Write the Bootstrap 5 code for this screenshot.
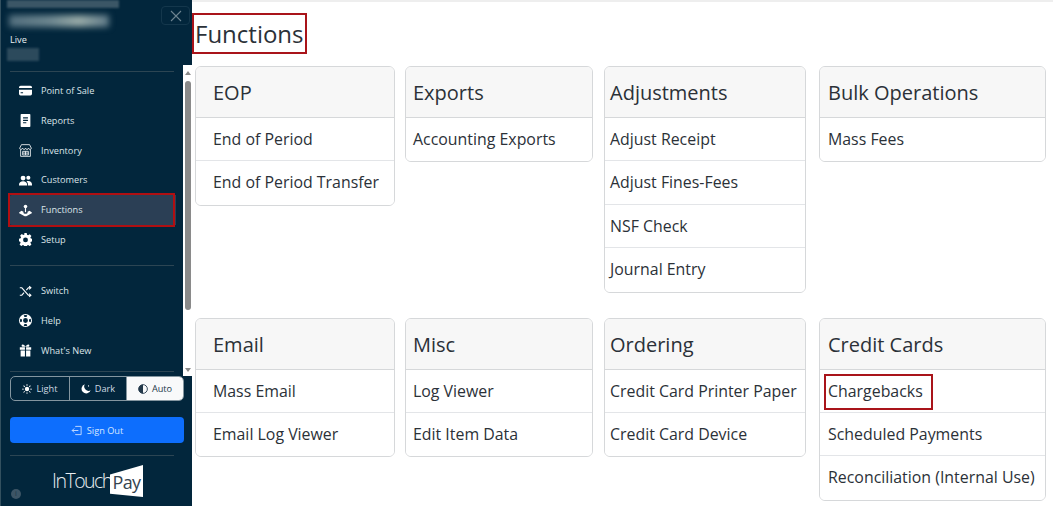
<!DOCTYPE html>
<html lang="en">
<head>
<meta charset="utf-8">
<title>Functions</title>
<link href="https://cdn.jsdelivr.net/npm/bootstrap@5.3.0/dist/css/bootstrap.min.css" rel="stylesheet">
<style>
html,body{height:506px;overflow:hidden;background:#fff}
body{font-family:"Open Sans","Noto Sans",sans-serif;color:#2b3138}
.shell{height:506px}
.side{width:192px;flex:none;background:#02263c;color:#dfe6ea;border-left:1px solid #33505f;position:relative;font-size:9.2px}
.topblur{position:absolute;left:6px;top:0;width:112px;height:8px;background:#3b5666;filter:blur(1px)}
.namebar{position:absolute;left:8px;top:15px;width:100px;height:12px;background:linear-gradient(90deg,#54707f,#6d8790 40%,#9aaca9 70%,#5f7a88);filter:blur(3px)}
.livetxt{position:absolute;left:9px;top:33px;font-size:9.2px;color:#e9eef0}
.acct{position:absolute;left:6px;top:48px;width:32px;height:13px;background:#2c4a5c;filter:blur(1px)}
.closer{position:absolute;left:160px;top:6px;width:29px;height:19px;border:1px solid #14374c;border-radius:4px;display:flex;align-items:center;justify-content:center}
.rule{position:absolute;left:9px;width:164px;height:1px;background:#2c4553}
.navzone{position:absolute;left:0;top:76px;width:183px}
.navrow{height:29.8px;padding-left:18px;gap:9px;display:flex;align-items:center;color:#dce4e8}
.navrow svg{width:13px;height:13px;flex:none;fill:#fff}
.navrow.sel{background:#2b3f55;margin:0 8px;padding-left:10px;border-radius:3px 0 0 3px}
.gapper{height:21.4px}
.hlnav{position:absolute;left:7px;top:193px;width:167px;height:34px;border:2px solid #b00f12;pointer-events:none}
.sbar{position:absolute;left:182px;top:65px;width:10px;height:311px;background:#fff}
.sthumb{position:absolute;left:2px;top:16px;width:6px;height:229px;background:#8a8a8a;border-radius:3px}
.sup,.sdn{position:absolute;left:2px;width:0;height:0;border-left:3px solid transparent;border-right:3px solid transparent}
.sup{top:6px;border-bottom:4px solid #8a8a8a}
.sdn{bottom:4px;border-top:4px solid #8a8a8a}
.themes{position:absolute;left:9px;top:376px;width:174px;height:25px;border:1px solid #8496a0;border-radius:5px;overflow:hidden;display:flex}
.themes span{display:flex;align-items:center;justify-content:center;gap:4px;color:#cfdbe2;font-size:9.2px;border-right:1px solid #8496a0;padding-top:1px}
.themes svg{width:10px;height:10px}
.themes span:nth-child(1){width:59px}
.themes span:nth-child(2){width:57px}
.themes span:nth-child(3){flex:1;background:#f8f9fa;color:#22384a;border:0}
.signout{position:absolute;left:9px;top:417px;width:174px;height:26px;border-radius:4px;background:#0d6efd;color:#d5e6ff;font-size:9.2px;display:flex;align-items:center;justify-content:center;gap:4px;border:0;padding:1px 0 0}
.logoword{position:absolute;left:51px;top:467px;font-size:19.5px;letter-spacing:-1.5px;font-weight:300;color:#e9eef1;line-height:28px}
.logopay{position:absolute;left:109px;top:465px;width:33px;height:32px;background:#fff;color:#36444f;font-size:18px;line-height:35px;text-align:center;letter-spacing:-.6px;clip-path:polygon(0 30%,100% 0,100% 100%,0 90%)}
.infodot{position:absolute;left:10px;top:489px;width:10px;height:10px;border-radius:50%;background:#3d5566;color:#1a3648;font-size:7px;line-height:10px;text-align:center}
.mainpane{flex:1;min-width:0;border-top:2px solid #eeeeee;position:relative}
.pagetitle{font-size:24px;font-weight:400;line-height:38px;margin:0;padding:0 1px;position:absolute;left:0;top:11px;height:41px;border:2px solid #a9141a;width:115px;display:flex;align-items:center;color:#2b3138}
.cardgrid{display:grid;grid-template-columns:210px 199px 215px 227px;padding:64px 0 0 3px}
.cardgrid>:nth-child(4n+1){margin-right:10px}
.cardgrid>:nth-child(4n+2){margin-right:11px}
.cardgrid>:nth-child(4n+3){margin-right:13px}
.cardgrid>:nth-child(n+5){margin-top:25px}
.fnbox{--bs-card-border-color:#d6d8da;--bs-card-border-radius:6px;--bs-card-cap-bg:#f7f7f7;border-width:1px;align-self:start}
.fnbox .card-header{height:51px;padding:0 var(--pad,17px);font-size:20px;line-height:52px;color:#2b3138;border-bottom-color:#d6d8da}
.fnbox .list-group-item{height:43.4px;padding:0 var(--pad,17px);line-height:43px;font-size:15.9px;color:#2b3138;border-color:#e3e5e8;white-space:nowrap}
.cardgrid>:nth-child(4n+2){--pad:7px}
.cardgrid>:nth-child(4n+3){--pad:5px}
.cardgrid>:nth-child(4n){--pad:8px}
.markbox{position:relative;display:inline-block}
.markbox::after{content:"";position:absolute;left:-4px;top:4px;width:109px;height:36px;border:2px solid #a9141a}
</style>
</head>
<body>
<div class="shell d-flex">
  <aside class="side">
    <div class="topblur"></div>
    <div class="namebar"></div>
    <div class="livetxt">Live</div>
    <div class="acct"></div>
    <div class="closer"><svg width="12" height="12" viewBox="0 0 12 12"><path d="M1 1l10 10M11 1L1 11" stroke="#6d8491" stroke-width="1.1"/></svg></div>
    <div class="rule" style="top:71px"></div>
    <nav class="navzone">
      <div class="navrow"><svg viewBox="0 0 16 16"><path d="M0 4a2 2 0 0 1 2-2h12a2 2 0 0 1 2 2v1H0V4zm0 3h16v5a2 2 0 0 1-2 2H2a2 2 0 0 1-2-2V7zm2 3v1.500h3V10H2z" fill-rule="evenodd"/></svg>Point of Sale</div>
      <div class="navrow"><svg viewBox="0 0 16 16"><path d="M3 0h10a1 1 0 0 1 1 1v14a1 1 0 0 1-1 1H3a1 1 0 0 1-1-1V1a1 1 0 0 1 1-1zm2 4v1.500h6V4H5zm0 3v1.500h6V7H5zm0 3v1.500h4V10H5z" fill-rule="evenodd"/></svg>Reports</div>
      <div class="navrow"><svg viewBox="0 0 16 16" style="fill:none;stroke:#fff;stroke-width:1"><path d="M3 .8h10l2.200 4.400c0 2-3 2-3.600 0 0 2-3.200 2-3.600 0 0 2-3.200 2-3.600 0 -.6 2-3.600 2-3.600 0L3 .8z"/><path d="M2 7v8.200h12V7M4.500 9h7v4.500h-7zM4.500 11.200h7M8 9v4.500"/></svg>Inventory</div>
      <div class="navrow"><svg viewBox="0 0 16 16"><circle cx="5" cy="5" r="3"/><circle cx="11.500" cy="4.500" r="2.500"/><path d="M0 13.500C0 10.500 2 9 5 9s5 1.500 5 4.500V14H0v-.5zM11 14v-1c0-1.500-.6-3-1.800-4 .7-.3 1.400-.4 2.300-.4 2.700 0 4.500 1.600 4.500 4.400v1h-5z"/></svg>Customers</div>
      <div class="navrow sel"><svg viewBox="0 0 16 16"><circle cx="8" cy="3" r="2.200"/><path d="M7.300 5h1.400v5H7.300z"/><path d="M3 8.300l2.500 1.100v1.300c0 .7 1.200 1.300 2.500 1.300s2.500-.6 2.500-1.300V9.400L13 8.300l2.800 2.200c.3.300.2.700-.1.900L9 15H7l-6.700-3.600c-.3-.2-.4-.6-.1-.9z"/></svg>Functions</div>
      <div class="navrow"><svg viewBox="0 0 16 16"><path d="M6.500 0h3l.4 2.200 1.400.6L13.200 1.500l2.100 2.100-1.300 1.900.6 1.400 2.200.4v3l-2.200.4-.6 1.400 1.300 1.900-2.100 2.100-1.900-1.300-1.400.6-.4 2.200h-3l-.4-2.200-1.400-.6-1.900 1.300-2.100-2.100 1.300-1.900-.6-1.400L-.2 10V7l2.200-.4.6-1.400-1.300-1.900 2.100-2.100 1.900 1.300 1.400-.6L6.500 0zM8 5.500a3 3 0 1 0 0 6 3 3 0 0 0 0-6z" fill-rule="evenodd"/></svg>Setup</div>
      <div class="gapper"></div>
      <div class="navrow"><svg viewBox="0 0 16 16" style="fill:none"><path d="M1 3.500h2.500l8 9H14M1 12.500h2.500l2.700-3M9 6.200l2.500-2.700H14M12.500 1.500l2.200 2-2.200 2M12.500 10.500l2.200 2-2.200 2" stroke="#fff" stroke-width="1.300" fill="none"/></svg>Switch</div>
      <div class="navrow"><svg viewBox="0 0 16 16"><path d="M8 0a8 8 0 1 1 0 16A8 8 0 0 1 8 0zm0 5a3 3 0 1 0 0 6 3 3 0 0 0 0-6zM5.800 1.600l.9 2.200a4.500 4.500 0 0 1 2.600 0l.9-2.200a7 7 0 0 0-4.400 0zM1.600 5.800a7 7 0 0 0 0 4.400l2.200-.9a4.500 4.500 0 0 1 0-2.600l-2.200-.9zm12.800 0l-2.200.9a4.500 4.500 0 0 1 0 2.600l2.200.9a7 7 0 0 0 0-4.400zM6.700 12.200l-.9 2.200a7 7 0 0 0 4.400 0l-.9-2.200a4.500 4.500 0 0 1-2.600 0z" fill-rule="evenodd"/></svg>Help</div>
      <div class="navrow"><svg viewBox="0 0 16 16"><path d="M1 4h6.300v3H1zM8.700 4H15v3H8.700zM2 8h5.300v7.500H2zM8.700 8H14v7.500H8.700zM4.500.5C6 .5 7.500 2 8 3.500 8.500 2 10 .5 11.500.5c1.500 0 1.800 2.500.2 3h-7.400C2.700 3 3 .5 4.500.5z"/></svg>What's New</div>
    </nav>
    <div class="sbar"><div class="sup"></div><div class="sthumb"></div><div class="sdn"></div></div>
    <div class="rule" style="top:371px"></div>
    <div class="rule" style="top:265px"></div>
    <div class="themes" role="group">
      <span><svg viewBox="0 0 16 16" fill="#fff"><circle cx="8" cy="8" r="3.500"/><path d="M7.400 0h1.200v3H7.400zM7.400 13h1.200v3H7.400zM0 7.400h3v1.200H0zM13 7.400h3v1.200h-3zM2 3l1-1 2 2-1 1zM11 12l1-1 2 2-1 1zM2 13l2-2 1 1-2 2zM11 4l2-2 1 1-2 2z"/></svg>Light</span>
      <span><svg viewBox="0 0 16 16" fill="#fff"><path d="M6 .5A7.500 7.500 0 1 0 15.500 10 7 7 0 0 1 6 .5z"/><circle cx="12" cy="3" r="1"/></svg>Dark</span>
      <span><svg viewBox="0 0 16 16"><circle cx="8" cy="8" r="7" fill="none" stroke="#22384a" stroke-width="1.400"/><path d="M8 1a7 7 0 0 0 0 14z" fill="#22384a"/></svg>Auto</span>
    </div>
    <button class="signout btn" type="button"><svg width="12" height="11" viewBox="0 0 16 16" fill="none" stroke="#cfe2ff" stroke-width="1.300"><path d="M6 3V2h8v12H6v-1M10 8H1M4 5L1 8l3 3"/></svg>Sign Out</button>
    <div class="rule" style="top:455px"></div>
    <div class="logoword">InTouch</div>
    <div class="logopay">Pay</div>
    <div class="infodot">i</div>
    <div class="hlnav"></div>
  </aside>
  <main class="mainpane">
    <h1 class="pagetitle">Functions</h1>
    <div class="cardgrid">
      <div class="card fnbox"><div class="card-header">EOP</div><div class="list-group list-group-flush"><div class="list-group-item">End of Period</div><div class="list-group-item">End of Period Transfer</div></div></div>
      <div class="card fnbox"><div class="card-header">Exports</div><div class="list-group list-group-flush"><div class="list-group-item">Accounting Exports</div></div></div>
      <div class="card fnbox"><div class="card-header">Adjustments</div><div class="list-group list-group-flush"><div class="list-group-item">Adjust Receipt</div><div class="list-group-item">Adjust Fines-Fees</div><div class="list-group-item">NSF Check</div><div class="list-group-item">Journal Entry</div></div></div>
      <div class="card fnbox"><div class="card-header">Bulk Operations</div><div class="list-group list-group-flush"><div class="list-group-item">Mass Fees</div></div></div>
      <div class="card fnbox"><div class="card-header">Email</div><div class="list-group list-group-flush"><div class="list-group-item">Mass Email</div><div class="list-group-item">Email Log Viewer</div></div></div>
      <div class="card fnbox"><div class="card-header">Misc</div><div class="list-group list-group-flush"><div class="list-group-item">Log Viewer</div><div class="list-group-item">Edit Item Data</div></div></div>
      <div class="card fnbox"><div class="card-header">Ordering</div><div class="list-group list-group-flush"><div class="list-group-item">Credit Card Printer Paper</div><div class="list-group-item">Credit Card Device</div></div></div>
      <div class="card fnbox"><div class="card-header">Credit Cards</div><div class="list-group list-group-flush"><div class="list-group-item"><span class="markbox">Chargebacks</span></div><div class="list-group-item">Scheduled Payments</div><div class="list-group-item">Reconciliation (Internal Use)</div></div></div>
    </div>
  </main>
</div>
<script src="https://cdn.jsdelivr.net/npm/bootstrap@5.3.0/dist/js/bootstrap.bundle.min.js"></script>
</body>
</html>
